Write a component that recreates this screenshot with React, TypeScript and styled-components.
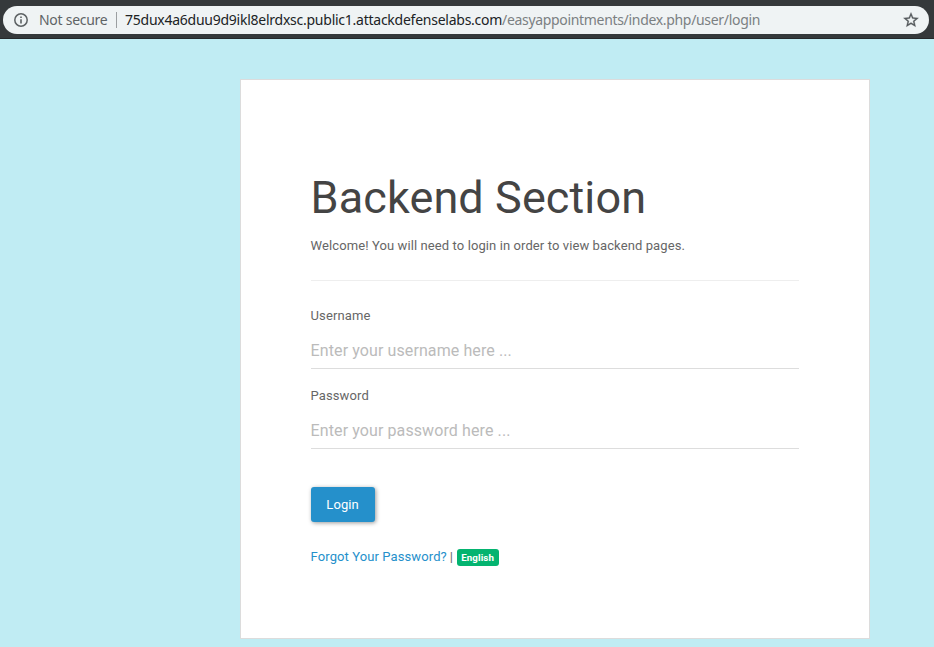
import React from "react";
import styled, { createGlobalStyle } from "styled-components";

const GlobalStyle = createGlobalStyle`
  *, *::before, *::after { box-sizing: border-box; }
  body {
    margin: 0;
    background: #c0ecf3;
    font-family: Roboto, "Liberation Sans", sans-serif;
    font-size: 13px;
    line-height: 24px;
    letter-spacing: 0.1px;
    color: #666;
  }
`;

const Page = styled.div`
  height: 647px;
  overflow: hidden;
  display: flex;
  flex-direction: column;
`;

const Toolbar = styled.header`
  flex: none;
  height: 39px;
  padding: 6px 5px 5px 3px;
  background: #35393b;
  border-bottom: 1px solid #26292b;
`;

const AddressBar = styled.div`
  height: 28px;
  border-radius: 14px;
  background: #eff3f4;
  display: flex;
  align-items: center;
  padding: 0 9px 0 11px;
  font-family: "Noto Sans", "Open Sans", sans-serif;
  font-size: 14px;
  line-height: 28px;
  white-space: nowrap;
`;

const Security = styled.span`
  width: 77px;
  margin-left: 11px;
  color: #5f6466;
  letter-spacing: -0.27px;
`;

const Separator = styled.span`
  width: 1px;
  height: 16px;
  background: #9b9fa1;
`;

const Host = styled.span`
  width: 377px;
  margin-left: 8px;
  color: #202325;
  letter-spacing: -0.25px;
`;

const Path = styled.span`
  flex: 1;
  color: #7b8082;
  letter-spacing: -0.32px;
`;

const Card = styled.main`
  width: 630px;
  height: 560px;
  margin: 40px 0 0 239.6px;
  padding: 93px 70px 0;
  background: #fff;
  border: 1px solid #dcdcdc;
`;

const Title = styled.h1`
  margin: 0;
  font-size: 45px;
  font-weight: 400;
  line-height: 50px;
  letter-spacing: 0.1px;
  color: #444;
`;

const Intro = styled.p`
  margin: 11px 0 0;
`;

const Rule = styled.hr`
  margin: 22px 0 23px;
  border: 0;
  border-top: 1px solid #eee;
`;

const Field = styled.div`
  height: 80px;
`;

const Label = styled.label`
  display: block;
  height: 24px;
`;

const Input = styled.input`
  display: block;
  width: 100%;
  height: 37px;
  margin-top: 4px;
  padding: 0;
  border: 0;
  border-radius: 0;
  outline: none;
  background: transparent;
  box-shadow: inset 0 -1px 0 #ddd;
  font: 16px Roboto, sans-serif;
  letter-spacing: 0.1px;
  color: #666;
  &::placeholder { color: #bbb; opacity: 1; }
`;

const LoginButton = styled.button`
  display: block;
  width: 64px;
  height: 35px;
  margin-top: 23px;
  padding: 0;
  border: 0;
  border-radius: 3px;
  background: #2590cb;
  box-shadow: 1px 1px 4px rgba(0, 0, 0, 0.4);
  color: #fff;
  font: 13px Roboto, sans-serif;
  letter-spacing: 0.1px;
`;

const Links = styled.div`
  display: flex;
  align-items: center;
  margin-top: 23px;
`;

const ForgotLink = styled.a`
  color: #2590cb;
  text-decoration: none;
`;

const Divider = styled.span`
  margin-left: 3px;
`;

const Language = styled.span`
  width: 42px;
  height: 17px;
  margin-left: 3.5px;
  border-radius: 3px;
  background: #04b470;
  color: #fff;
  font-size: 9.75px;
  font-weight: 700;
  line-height: 18px;
  text-align: center;
`;

const InfoIcon = () => (
  <svg width="14" height="14" viewBox="0 0 14 14" fill="none">
    <circle cx="7" cy="7" r="6.2" stroke="#5c6163" strokeWidth="1.5" />
    <path d="M7 6.2V10.4M7 3.4V5" stroke="#5c6163" strokeWidth="1.6" />
  </svg>
);

const StarIcon = () => (
  <svg width="18" height="18" viewBox="0 0 24 24" fill="#54595c" stroke="#54595c" strokeWidth="0.4">
    <path d="M22 9.24l-7.19-.62L12 2 9.19 8.63 2 9.24l5.46 4.73L5.82 21 12 17.27 18.18 21l-1.63-7.03L22 9.24zM12 15.4l-3.76 2.27 1-4.28-3.32-2.88 4.38-.38L12 6.1l1.71 4.04 4.38.38-3.32 2.88 1 4.28L12 15.4z" />
  </svg>
);

export default function App() {
  return (
    <Page>
      <GlobalStyle />
      <Toolbar>
        <AddressBar>
          <InfoIcon />
          <Security>Not secure</Security>
          <Separator />
          <Host>75dux4a6duu9d9ikl8elrdxsc.public1.attackdefenselabs.com</Host>
          <Path>/easyappointments/index.php/user/login</Path>
          <StarIcon />
        </AddressBar>
      </Toolbar>
      <Card>
        <Title>Backend Section</Title>
        <Intro>Welcome! You will need to login in order to view backend pages.</Intro>
        <Rule />
        <Field>
          <Label htmlFor="username">Username</Label>
          <Input id="username" placeholder="Enter your username here ..." />
        </Field>
        <Field>
          <Label htmlFor="password">Password</Label>
          <Input id="password" type="password" placeholder="Enter your password here ..." />
        </Field>
        <LoginButton>Login</LoginButton>
        <Links>
          <ForgotLink href="#">Forgot Your Password?</ForgotLink>
          <Divider>|</Divider>
          <Language>English</Language>
        </Links>
      </Card>
    </Page>
  );
}
